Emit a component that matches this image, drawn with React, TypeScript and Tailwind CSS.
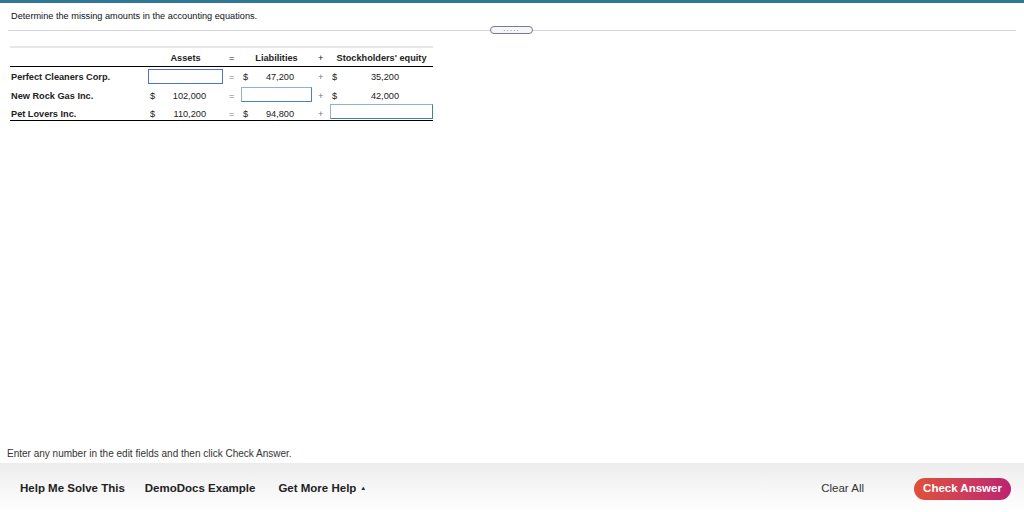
import React from 'react';

const font = { fontFamily: '"Liberation Sans", Arial, sans-serif' };

type Row = {
  name: string;
  assets: string | null;
  liabilities: string | null;
  equity: string | null;
  h: string;
  shift: string;
};

const rows: Row[] = [
  { name: 'Perfect Cleaners Corp.', assets: null, liabilities: '47,200', equity: '35,200', h: 'h-[19px]', shift: 'pt-[1px]' },
  { name: 'New Rock Gas Inc.', assets: '102,000', liabilities: null, equity: '42,000', h: 'h-[17px]', shift: 'pt-[3px]' },
  { name: 'Pet Lovers Inc.', assets: '110,200', liabilities: '94,800', equity: null, h: 'h-[17px]', shift: 'pt-[5px]' },
];

const Field = ({ className }: { className: string }) => (
  <input
    type="text"
    className={`h-[15px] w-full bg-white outline-none border ${className}`}
  />
);

const Amount = ({ value, pad, shift }: { value: string; pad: string; shift: string }) => (
  <div className={`flex w-full items-center justify-between pl-[2px] ${pad} ${shift}`}>
    <span>$</span>
    <span>{value}</span>
  </div>
);

export default function App() {
  return (
    <div className="relative flex h-[512px] w-[1024px] flex-col bg-white text-[#222]" style={font}>
      <div className="h-[3px] bg-[#2f7698]" />

      <div className="px-[11px] pt-[7px] text-[9.2px] leading-[12px] text-[#111]">
        Determine the missing amounts in the accounting equations.
      </div>

      <div className="relative mx-[8px] mt-[8px] h-px bg-[#d4d4dc]">
        <div className="absolute left-[482px] top-[-4px] flex h-[8px] w-[43px] items-center justify-center rounded-[4px] border border-[#777c88] bg-[#f4f6f9]">
          <span className="text-[7px] leading-none tracking-[1px] text-[#555]">·····</span>
        </div>
      </div>

      <div className="ml-[10px] mt-[15px] w-[423px] border-t-2 border-[#e8e8e8] text-[9.2px]">
        <div className="grid h-[19px] grid-cols-[138px_75px_18px_71px_18px_103px] items-end border-b border-black pb-[3px] font-bold leading-none">
          <div />
          <div className="text-center">Assets</div>
          <div className="pl-[6px] font-normal">=</div>
          <div className="text-center">Liabilities</div>
          <div className="pl-[6px] font-normal">+</div>
          <div className="text-center">Stockholders' equity</div>
        </div>

        <div className="border-b border-black leading-[12px]">
          {rows.map((r) => (
            <div
              key={r.name}
              className={`grid grid-cols-[138px_75px_18px_71px_18px_103px] items-center ${r.h}`}
            >
              <div className={`pl-px font-bold ${r.shift}`}>{r.name}</div>
              <div>
                {r.assets ? (
                  <Amount value={r.assets} pad="pr-[17px]" shift={r.shift} />
                ) : (
                  <Field className="border-[#4a74c9]" />
                )}
              </div>
              <div className={`pl-[6px] text-[#777] ${r.shift}`}>=</div>
              <div>
                {r.liabilities ? (
                  <Amount value={r.liabilities} pad="pr-[18px]" shift={r.shift} />
                ) : (
                  <Field className="border-[#8fb3c9] border-r-[#4b86a8] border-b-[#4b86a8]" />
                )}
              </div>
              <div className={`pl-[6px] text-[#777] ${r.shift}`}>+</div>
              <div>
                {r.equity ? (
                  <Amount value={r.equity} pad="pr-[34px]" shift={r.shift} />
                ) : (
                  <Field className="border-[#8fb3c9] border-r-[#3f7fa3] border-b-[#3f7fa3]" />
                )}
              </div>
            </div>
          ))}
        </div>
      </div>

      <div className="mt-auto px-[7px] pb-[2px] text-[10px] text-[#333]">
        Enter any number in the edit fields and then click Check Answer.
      </div>

      <div className="flex h-[49px] items-center bg-gradient-to-b from-[#ededed] to-white pt-[2px] text-[11.5px]">
        <div className="flex items-center pl-[20px] font-bold text-[#222]">
          <span>Help Me Solve This</span>
          <span className="ml-[20px]">DemoDocs Example</span>
          <span className="ml-[23px]">Get More Help</span>
          <span className="ml-[4px] text-[6px]">▲</span>
        </div>
        <div className="ml-auto text-[#333]">Clear All</div>
        <button className="ml-[50px] mr-[13px] flex h-[22px] w-[97px] items-center justify-center rounded-full bg-gradient-to-r from-[#df5136] to-[#bd2270] text-[11.5px] font-bold text-white">
          Check Answer
        </button>
      </div>
    </div>
  );
}
